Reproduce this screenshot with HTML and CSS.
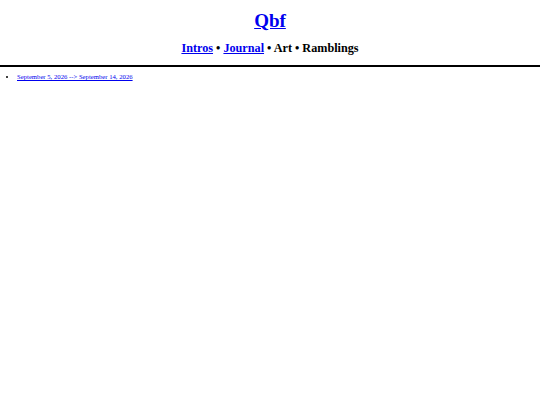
FILE: index.html
```html
<!DOCTYPE html>
<html>
<head>
<meta charset="utf-8">
<link rel="stylesheet" href="styles.css">
</head>
<body>
<header class="site-header">
  <h1 class="site-title"><a href="#">Qbf</a></h1>
  <nav class="site-nav"><a href="#">Intros</a> • <a href="#">Journal</a> • Art • Ramblings</nav>
</header>
<main class="content">
  <ul class="entries">
    <li><a href="#">September 5, 2026 --&gt; September 14, 2026</a></li>
  </ul>
</main>
</body>
</html>
```
FILE: styles.css
```css
html, body {
  margin: 0;
  padding: 0;
  background: #fff;
  font-family: "Liberation Serif", "Times New Roman", serif;
  color: #000;
}
a { color: #0000ee; }
.site-header {
  text-align: center;
  border-bottom: 2px solid #000;
  padding: 10px 0 9px;
}
.site-title {
  font-size: 19px;
  margin: 0 0 8px;
  line-height: 22px;
}
.site-nav {
  font-size: 12.2px;
  font-weight: bold;
  line-height: 16px;
}
.content { padding: 0 8px; }
.entries {
  margin: 6px 0;
  padding-left: 9px;
  font-size: 6.7px;
}
```
